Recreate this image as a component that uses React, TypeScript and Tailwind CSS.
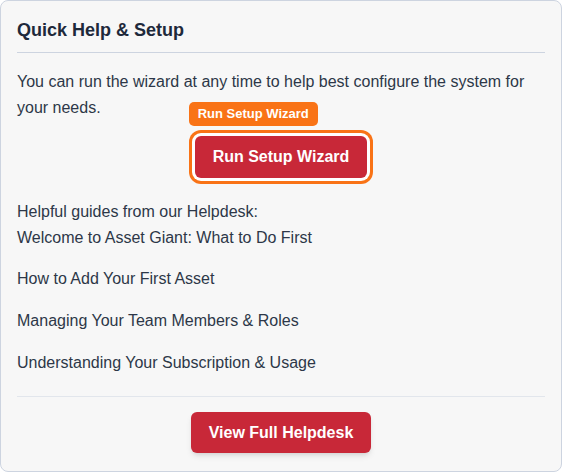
import React from 'react';

const guides = [
  'Welcome to Asset Giant: What to Do First',
  'How to Add Your First Asset',
  'Managing Your Team Members & Roles',
  'Understanding Your Subscription & Usage',
];

const App: React.FC = () => {
  return (
    <div
      className="min-h-[472px] w-[562px] bg-white"
      style={{ fontFamily: '"Liberation Sans", Arial, sans-serif' }}
    >
      <div className="flex h-[472px] flex-col rounded-lg border border-[#cdd4e0] bg-[#f7f7f7] px-4 pt-[15px] pb-4">
        <h2 className="border-b border-[#cdd4e0] pb-2 text-lg leading-7 font-bold text-[#1e293b]">
          Quick Help &amp; Setup
        </h2>

        <p className="mt-4 text-base leading-[25.6px] text-[#2d3748]">
          You can run the wizard at any time to help best configure the system for your needs.
        </p>

        <div className="mt-4 flex justify-center">
          <div className="relative">
            <span className="absolute -top-[34px] -left-[6px] rounded-[5px] bg-[#f97316] px-[9px] py-[4px] text-[13px] leading-4 font-bold whitespace-nowrap text-white">
              Run Setup Wizard
            </span>
            <button className="rounded-md bg-[#c82838] px-[18px] py-[9px] text-base leading-6 font-bold text-white ring-[3px] ring-[#f97316] ring-offset-[3px] ring-offset-white">
              Run Setup Wizard
            </button>
          </div>
        </div>

        <div className="mt-[21px] text-base leading-[25.6px] text-[#2d3748]">
          <p>Helpful guides from our Helpdesk:</p>
          <ul className="flex flex-col gap-4">
            {guides.map((g) => (
              <li key={g}>
                <a href="#" className="text-[#2d3748]">
                  {g}
                </a>
              </li>
            ))}
          </ul>
        </div>

        <div className="mt-[21px] flex justify-center border-t border-[#e2e6ec] pt-[15px]">
          <button className="rounded-md bg-[#c82838] px-[18px] py-[8.5px] text-base leading-6 font-bold text-white shadow-md">
            View Full Helpdesk
          </button>
        </div>
      </div>
    </div>
  );
};

export default App;
